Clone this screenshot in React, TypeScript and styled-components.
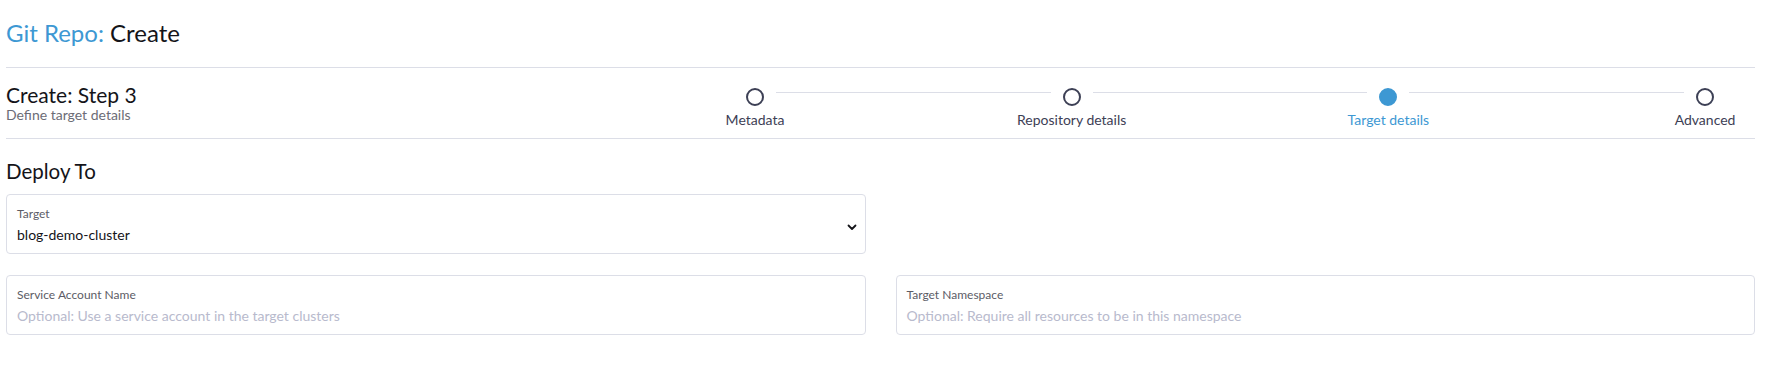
import React from "react";
import styled, { createGlobalStyle } from "styled-components";

const GlobalStyle = createGlobalStyle`
  html, body {
    margin: 0;
    padding: 0;
    background: #ffffff;
  }
  body {
    font-family: Lato, "Noto Sans", "Liberation Sans", sans-serif;
    color: #141419;
  }
  * { box-sizing: border-box; }
`;

const Page = styled.div`
  padding: 0 12px 0 6px;
`;

const PageTitle = styled.h1`
  margin: 0;
  padding: 18px 0 20px;
  font-size: 24px;
  font-weight: 400;
  line-height: normal;
  border-bottom: 1px solid #dcdee7;
`;

const Crumb = styled.span`
  color: #3d98d3;
`;

const HeaderRow = styled.div`
  display: flex;
  align-items: flex-start;
  height: 71px;
  border-bottom: 1px solid #dcdee7;
`;

const StepTitle = styled.div`
  flex: 1;
  padding-top: 14px;
  display: flex;
  flex-direction: column;
`;

const StepHeading = styled.div`
  font-size: 21px;
  line-height: normal;
`;

const StepSub = styled.div`
  margin-top: -1px;
  font-size: 14px;
  line-height: normal;
  color: #6c6c76;
`;

const Stepper = styled.div`
  display: flex;
  width: 992px;
  margin-right: 29px;
  margin-top: 20px;
`;

const Step = styled.div`
  width: 42px;
  flex: none;
  display: flex;
  flex-direction: column;
  align-items: center;
`;

const Dot = styled.div<{ $active?: boolean }>`
  width: 18px;
  height: 18px;
  border-radius: 50%;
  border: 2px solid ${(p) => (p.$active ? "#3d98d3" : "#3d4055")};
  background: ${(p) => (p.$active ? "#3d98d3" : "#ffffff")};
`;

const StepLabel = styled.div<{ $active?: boolean }>`
  margin-top: 5px;
  font-size: 14px;
  line-height: normal;
  white-space: nowrap;
  color: ${(p) => (p.$active ? "#3d98d3" : "#3d4055")};
`;

const Divider = styled.div`
  flex: 1;
  height: 0;
  margin-top: 4px;
  border-top: 1px solid #dcdee7;
`;

const SectionTitle = styled.h3`
  margin: 20px 0 11px;
  font-size: 20.5px;
  font-weight: 400;
  line-height: normal;
`;

const Grid = styled.div`
  display: grid;
  grid-template-columns: 1fr 1fr;
  column-gap: 30px;
  row-gap: 21px;
`;

const Field = styled.div`
  position: relative;
  height: 60px;
  border: 1px solid #dcdee7;
  border-radius: 4px;
  padding: 11px 10px 0;
  display: flex;
  flex-direction: column;
  gap: 5px;
`;

const FieldLabel = styled.div`
  font-size: 12px;
  line-height: normal;
  color: #5c5c66;
`;

const FieldValue = styled.div<{ $placeholder?: boolean }>`
  font-size: 14px;
  line-height: normal;
  color: ${(p) => (p.$placeholder ? "#b8bacd" : "#141419")};
`;

const Chevron = styled.svg`
  position: absolute;
  right: 8px;
  top: 29px;
`;

const steps = [
  { label: "Metadata" },
  { label: "Repository details" },
  { label: "Target details", active: true },
  { label: "Advanced" },
];

export default function App() {
  return (
    <Page>
      <GlobalStyle />
      <PageTitle>
        <Crumb>Git Repo:</Crumb> Create
      </PageTitle>
      <HeaderRow>
        <StepTitle>
          <StepHeading>Create: Step 3</StepHeading>
          <StepSub>Define target details</StepSub>
        </StepTitle>
        <Stepper>
          {steps.map((s, i) => (
            <React.Fragment key={s.label}>
              {i > 0 && <Divider />}
              <Step>
                <Dot $active={s.active} />
                <StepLabel $active={s.active}>{s.label}</StepLabel>
              </Step>
            </React.Fragment>
          ))}
        </Stepper>
      </HeaderRow>
      <SectionTitle>Deploy To</SectionTitle>
      <Grid>
        <Field>
          <FieldLabel>Target</FieldLabel>
          <FieldValue>blog-demo-cluster</FieldValue>
          <Chevron width="10" height="7" viewBox="0 0 10 7">
            <path d="M1.5 1.5 L5 5 L8.5 1.5" fill="none" stroke="#141419" strokeWidth="1.8" strokeLinecap="round" strokeLinejoin="round" />
          </Chevron>
        </Field>
        <div />
        <Field>
          <FieldLabel>Service Account Name</FieldLabel>
          <FieldValue $placeholder>Optional: Use a service account in the target clusters</FieldValue>
        </Field>
        <Field>
          <FieldLabel>Target Namespace</FieldLabel>
          <FieldValue $placeholder>Optional: Require all resources to be in this namespace</FieldValue>
        </Field>
      </Grid>
    </Page>
  );
}
